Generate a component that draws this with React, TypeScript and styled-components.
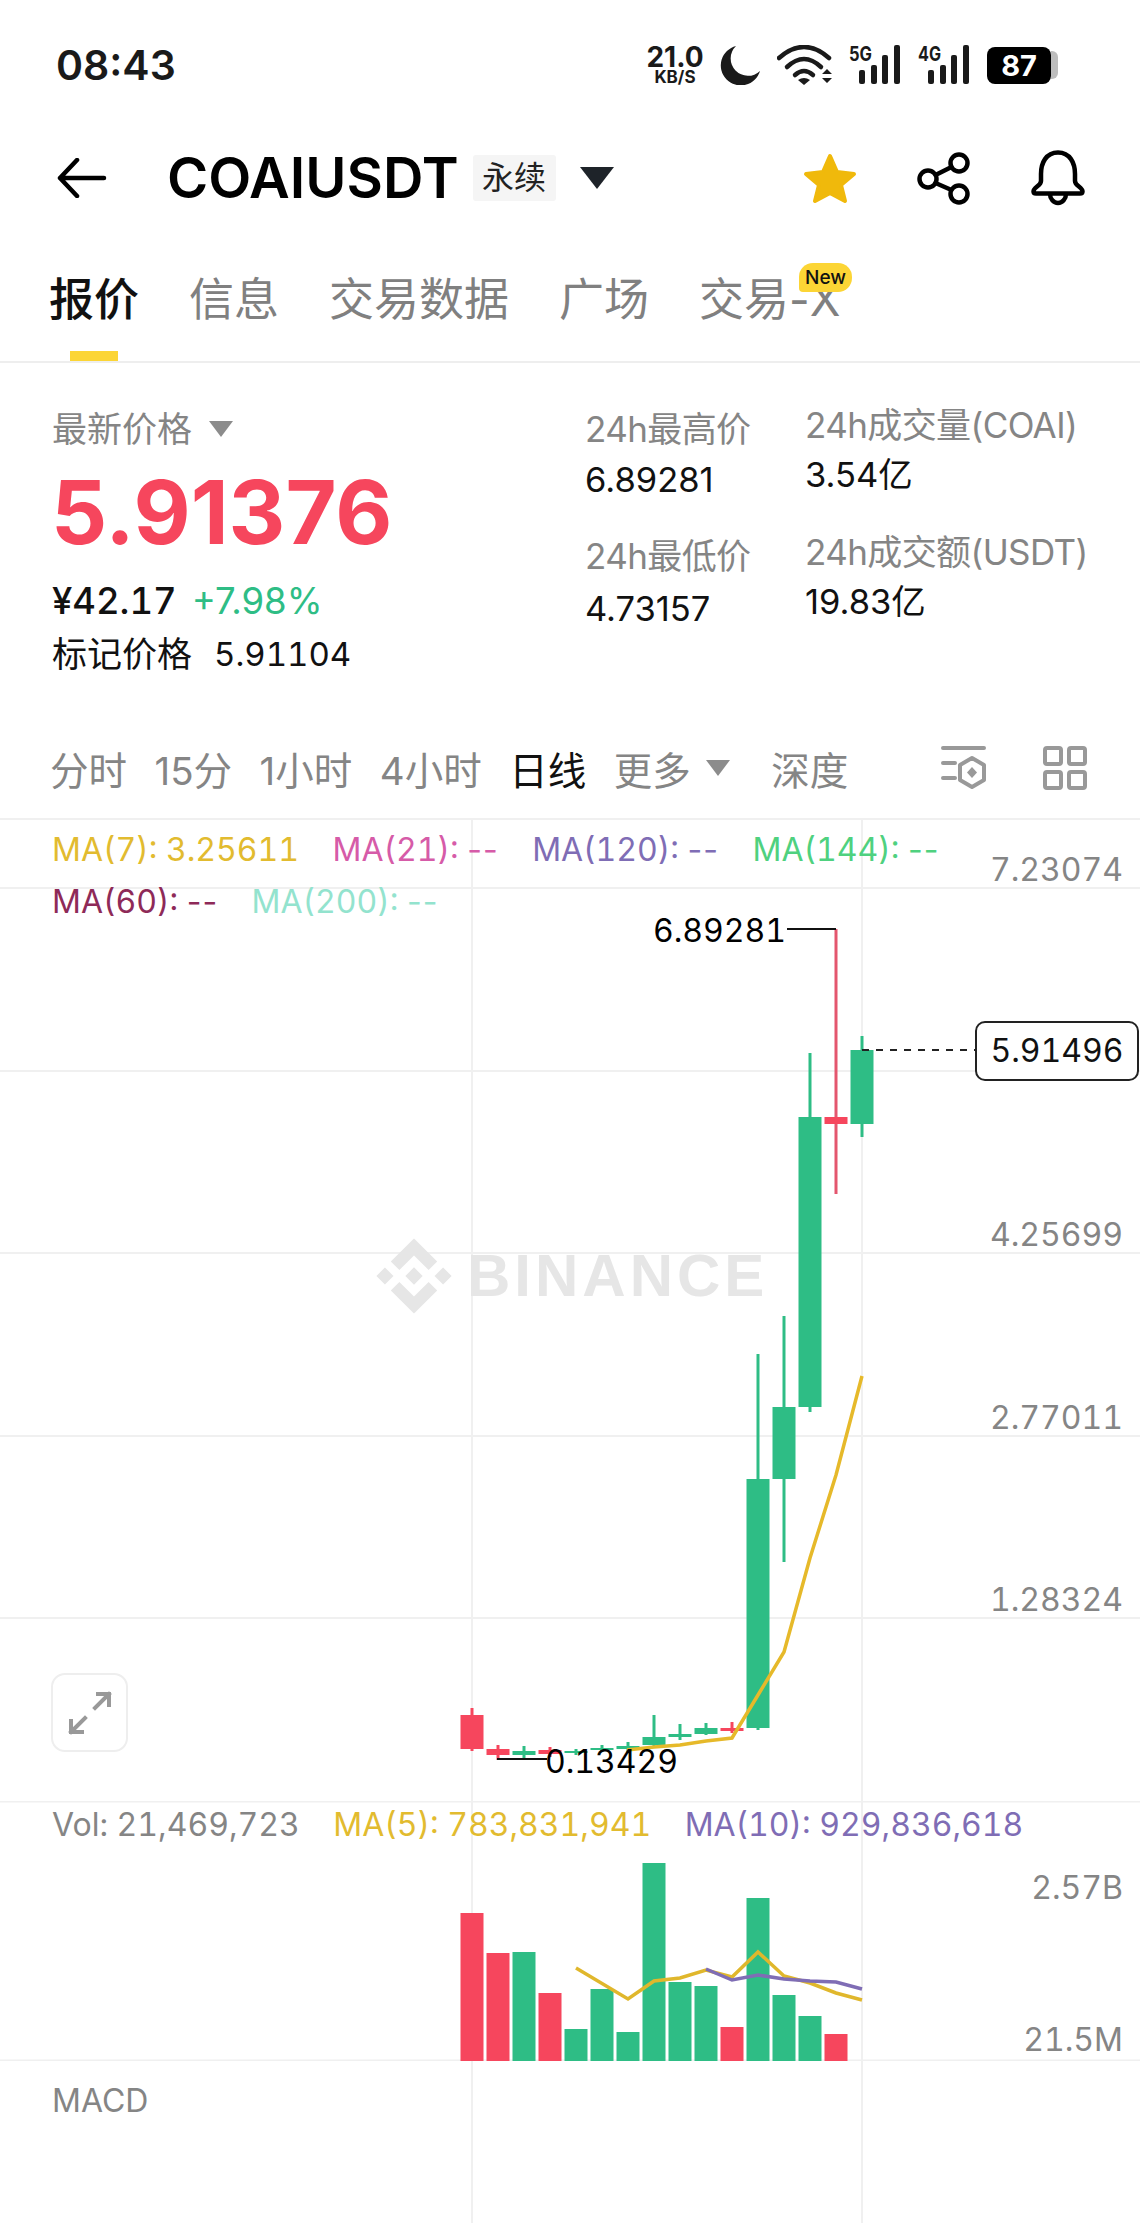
import styled, { createGlobalStyle } from "styled-components";

const UI_FONT = `Inter, "Noto Sans CJK SC", sans-serif`;

const GREEN = "#2ebd85";
const RED = "#f6465d";
const GRID = "#f0f0f0";

const GlobalStyle = createGlobalStyle`
  html, body {
    margin: 0;
    padding: 0;
    background: #fff;
  }
  * {
    box-sizing: border-box;
  }
`;

const Page = styled.div`
  width: 1140px;
  height: 2223px;
  overflow: hidden;
  background: #fff;
  font-family: ${UI_FONT};
  color: #000;
`;

/* status bar */
const StatusBar = styled.div`
  height: 130px;
  display: flex;
  align-items: center;
  padding: 0 82px 0 56px;
`;

const Clock = styled.div`
  font-size: 41px;
  font-weight: 600;
  color: #1a1a1a;
`;

const StatusIcons = styled.div`
  margin-left: auto;
  display: flex;
  align-items: center;
  gap: 17px;
`;

const Speed = styled.div`
  width: 56px;
  display: flex;
  flex-direction: column;
  align-items: center;
  font-weight: 700;
  color: #1a1a1a;
`;

const SpeedValue = styled.span`
  font-size: 28px;
  line-height: 23px;
`;

const SpeedUnit = styled.span`
  font-size: 17px;
  line-height: 16px;
`;

const SignalSvg = styled.svg`
  display: block;
  margin-top: -6px;
`;

const Battery = styled.div`
  display: flex;
  align-items: center;
`;

const BatteryBody = styled.div`
  width: 64px;
  height: 37px;
  border-radius: 8px;
  background: #000;
  color: #fff;
  font-size: 29px;
  font-weight: 700;
  line-height: 37px;
  text-align: center;
`;

const BatteryNub = styled.div`
  width: 7px;
  height: 28px;
  border-radius: 0 6px 6px 0;
  background: #bdbdbd;
`;

/* symbol header */
const SymbolBar = styled.div`
  height: 96px;
  display: flex;
  align-items: center;
  padding: 0 55px 0 57px;
`;

const Symbol = styled.div`
  margin-left: 60px;
  font-size: 56px;
  font-weight: 600;
`;

const ContractTag = styled.div`
  margin-left: 14px;
  width: 83px;
  height: 46px;
  background: #f5f5f5;
  border-radius: 3px;
  font-size: 32px;
  line-height: 46px;
  text-align: center;
  color: #222;
`;

const SymbolCaret = styled.div`
  margin-left: 24px;
  width: 0;
  height: 0;
  border-left: 17px solid transparent;
  border-right: 17px solid transparent;
  border-top: 22px solid #1e2329;
`;

const SymbolActions = styled.div`
  margin-left: auto;
  display: flex;
  align-items: center;
  gap: 60px;
`;

/* tabs */
const Tabs = styled.div`
  height: 137px;
  display: flex;
  gap: 50px;
  padding: 48px 0 0 49px;
  border-bottom: 2px solid #eeeeee;
`;

const Tab = styled.div<{ $active?: boolean }>`
  position: relative;
  height: 87px;
  font-size: 45px;
  line-height: 52px;
  color: ${({ $active }) => ($active ? "#111" : "#808080")};
  font-weight: ${({ $active }) => ($active ? 500 : 400)};

  ${({ $active }) =>
    $active
      ? `&::after {
          content: "";
          position: absolute;
          left: 21px;
          bottom: 0;
          width: 48px;
          height: 10px;
          background: #fcd535;
        }`
      : ""}
`;

const NewBadge = styled.span`
  position: absolute;
  left: 100px;
  top: -11px;
  width: 53px;
  height: 29px;
  border-radius: 14px 14px 14px 4px;
  background: #fcd535;
  color: #111;
  font-size: 19px;
  font-weight: 500;
  line-height: 29px;
  text-align: center;
`;

/* quote */
const Quote = styled.div`
  height: 355px;
  display: flex;
  padding: 42px 0 0 52px;
`;

const PriceColumn = styled.div`
  width: 533px;
`;

const StatColumn = styled.div<{ $width: number; $shift?: number }>`
  width: ${({ $width }) => $width}px;
  margin-top: ${({ $shift }) => $shift ?? 0}px;
`;

const MutedLabel = styled.div`
  display: flex;
  align-items: center;
  gap: 17px;
  font-size: 35px;
  line-height: 48px;
  color: #858585;
`;

const SmallCaret = styled.span`
  display: inline-block;
  width: 0;
  height: 0;
  border-left: 12px solid transparent;
  border-right: 12px solid transparent;
  border-top: 16px solid #8c8c8c;
`;

const LastPrice = styled.div`
  margin-top: 16px;
  margin-left: -1px;
  font-size: 88px;
  font-weight: 700;
  line-height: 86px;
  color: ${RED};
`;

const FiatRow = styled.div`
  margin-top: 24px;
  display: flex;
  align-items: center;
  gap: 15px;
  line-height: 44px;
`;

const FiatValue = styled.span`
  font-size: 36.5px;
  font-weight: 500;
  font-variant-numeric: tabular-nums;
  color: #111;
`;

const Change = styled.span`
  font-size: 36.5px;
  color: ${GREEN};
`;

const MarkRow = styled.div`
  margin-top: 9px;
  display: flex;
  align-items: center;
  gap: 22px;
  font-size: 35px;
  line-height: 44px;
  color: #111;
`;

const MarkValue = styled.span`
  font-size: 33px;
  font-variant-numeric: tabular-nums;
`;

const StatBlock = styled.div`
  height: 127px;
`;

const StatLabel = styled.div`
  font-size: 35px;
  line-height: 48px;
  letter-spacing: -0.6px;
  color: #858585;
  white-space: nowrap;
`;

const StatValue = styled.div<{ $gap: number }>`
  margin-top: ${({ $gap }) => $gap}px;
  font-size: 34.5px;
  line-height: 44px;
  color: #111;
`;

/* interval toolbar */
const Toolbar = styled.div`
  height: 100px;
  display: flex;
  align-items: center;
  gap: 27.5px;
  padding: 0 53px 0 50px;
`;

const Interval = styled.div<{ $active?: boolean; $far?: boolean }>`
  display: flex;
  align-items: center;
  gap: 15px;
  margin-left: ${({ $far }) => ($far ? 14 : 0)}px;
  font-size: 38.5px;
  color: ${({ $active }) => ($active ? "#111" : "#858585")};
`;

const ToolbarIcons = styled.div`
  margin-left: auto;
  display: flex;
  align-items: center;
  gap: 57px;
`;

/* chart panels */
const ChartPanel = styled.div<{ $height: number; $top?: boolean }>`
  position: relative;
  height: ${({ $height }) => $height}px;
  ${({ $top }) => ($top ? `border-top: 2px solid ${GRID};` : "")}
`;

const ChartCanvas = styled.svg`
  position: absolute;
  left: 0;
  top: 0;
  display: block;
`;

const Legend = styled.div<{ $width: number; $pad: number }>`
  position: relative;
  width: ${({ $width }) => $width}px;
  display: flex;
  flex-wrap: wrap;
  gap: 8px 33.5px;
  padding: ${({ $pad }) => $pad}px 0 0 52px;
  font-size: 32px;
  line-height: 44px;
`;

const LegendItem = styled.span<{ $color: string }>`
  color: ${({ $color }) => $color};
  font-variant-numeric: tabular-nums;
  white-space: nowrap;
`;

const Blank = styled.span`
  font-variant-numeric: normal;
  letter-spacing: 1px;
`;

const AxisLabel = styled.div<{ $top: number }>`
  position: absolute;
  right: 17px;
  top: ${({ $top }) => $top}px;
  font-size: 32px;
  font-variant-numeric: tabular-nums;
  line-height: 44px;
  color: #858585;
`;

const PriceMark = styled.div<{ $left: number; $top: number }>`
  position: absolute;
  left: ${({ $left }) => $left}px;
  top: ${({ $top }) => $top}px;
  font-size: 32px;
  font-variant-numeric: tabular-nums;
  line-height: 44px;
  color: #000;
`;

const CurrentPrice = styled.div`
  position: absolute;
  left: 975px;
  top: 201px;
  width: 164px;
  height: 60px;
  border: 2px solid #222;
  border-radius: 10px;
  background: #fff;
  color: #111;
  font-size: 32px;
  font-variant-numeric: tabular-nums;
  line-height: 56px;
  text-align: center;
`;

const Watermark = styled.div`
  position: absolute;
  left: 376px;
  top: 418px;
  display: flex;
  align-items: center;
  gap: 15px;
  color: #e6e6e6;
`;

const WatermarkText = styled.span`
  font-family: "Liberation Sans", sans-serif;
  font-size: 60px;
  font-weight: 700;
  letter-spacing: 4px;
  line-height: 76px;
`;

const ExpandButton = styled.div`
  position: absolute;
  left: 51px;
  top: 853px;
  width: 77px;
  height: 79px;
  border: 2px solid #eeeeee;
  border-radius: 14px;
  background: #fff;
  display: flex;
  align-items: center;
  justify-content: center;
`;

const PanelLabel = styled.div`
  position: relative;
  padding: 18px 0 0 52px;
  font-size: 32px;
  line-height: 44px;
  color: #858585;
`;

type Candle = {
  x: number;
  high: number;
  low: number;
  top: number;
  bottom: number;
  up: boolean;
};

const candles: Candle[] = [
  { x: 472, high: 1708, low: 1751, top: 1715, bottom: 1749, up: false },
  { x: 498, high: 1745, low: 1760, top: 1749, bottom: 1755, up: false },
  { x: 524, high: 1746, low: 1758, top: 1751, bottom: 1755, up: true },
  { x: 550, high: 1747, low: 1757, top: 1750, bottom: 1754, up: false },
  { x: 576, high: 1749, low: 1755, top: 1751, bottom: 1753, up: true },
  { x: 602, high: 1745, low: 1752, top: 1748, bottom: 1750, up: true },
  { x: 628, high: 1742, low: 1752, top: 1746, bottom: 1749, up: true },
  { x: 654, high: 1715, low: 1747, top: 1737, bottom: 1745, up: true },
  { x: 680, high: 1724, low: 1740, top: 1734, bottom: 1737, up: true },
  { x: 706, high: 1723, low: 1735, top: 1728, bottom: 1734, up: true },
  { x: 732, high: 1722, low: 1733, top: 1728, bottom: 1731, up: false },
  { x: 758, high: 1354, low: 1730, top: 1479, bottom: 1728, up: true },
  { x: 784, high: 1316, low: 1562, top: 1407, bottom: 1479, up: true },
  { x: 810, high: 1053, low: 1412, top: 1117, bottom: 1407, up: true },
  { x: 836, high: 929, low: 1194, top: 1117, bottom: 1124, up: false },
  { x: 862, high: 1036, low: 1137, top: 1050, bottom: 1124, up: true },
];

const volumes: [number, boolean][] = [
  [1913, false],
  [1953, false],
  [1952, true],
  [1993, false],
  [2029, true],
  [1989, true],
  [2032, true],
  [1863, true],
  [1982, true],
  [1986, true],
  [2027, false],
  [1898, true],
  [1995, true],
  [2016, true],
  [2034, false],
];

const ma7 = "627,1750 654,1747 680,1745 706,1741 732,1738 758,1695 784,1652 810,1558 836,1475 862,1376";
const volMa5 = "576,1968 628,1999 654,1981 680,1978 706,1970 732,1977 758,1952 784,1976 810,1983 836,1993 862,2000";
const volMa10 = "706,1969 732,1980 758,1975 784,1979 810,1981 836,1982 862,1989";

const gridRows = [888, 1071, 1253, 1436, 1618];

const maLegend = [
  { text: "MA(7): 3.25611", color: "#e2bb2f", empty: false },
  { text: "MA(21): ", color: "#d65ba8", empty: true },
  { text: "MA(120): ", color: "#7f6db5", empty: true },
  { text: "MA(144): ", color: "#4fd17f", empty: true },
  { text: "MA(60): ", color: "#8e2a58", empty: true },
  { text: "MA(200): ", color: "#93e3ce", empty: true },
];

const volLegend = [
  { text: "Vol: 21,469,723", color: "#858585" },
  { text: "MA(5): 783,831,941", color: "#e2bb2f" },
  { text: "MA(10): 929,836,618", color: "#7f6db5" },
];

const axisLabels = [
  { text: "7.23074", top: 28 },
  { text: "4.25699", top: 393 },
  { text: "2.77011", top: 576 },
  { text: "1.28324", top: 758 },
];

const MoonIcon = () => (
  <svg width="40" height="40" viewBox="0 0 40 40">
    <path d="M16 1A20 20 0 1 0 40 26 A17 17 0 0 1 16 1Z" fill="#1a1a1a" />
  </svg>
);

const WifiIcon = () => (
  <svg width="55" height="40" viewBox="0 0 55 40" fill="none" stroke="#1a1a1a" strokeWidth="4.5" strokeLinecap="round">
    <path d="M2 13Q27 -9 52 13" />
    <path d="M10 22Q27 6 44 22" />
    <path d="M18 30Q27 22 36 30" />
    <path d="M21 35L27 40L33 35Q27 31 21 35Z" fill="#1a1a1a" stroke="none" />
    <path d="M45 29L50 24L55 29ZM45 33L50 38L55 33Z" fill="#1a1a1a" stroke="none" />
  </svg>
);

const SignalIcon = ({ label }: { label: string }) => (
  <SignalSvg width="52" height="46" viewBox="0 -6 52 46">
    <text x="0" y="16" fontFamily="Inter, sans-serif" fontWeight="700" fontSize="20" fill="#1a1a1a" textLength="23" lengthAdjust="spacingAndGlyphs">
      {label}
    </text>
    <rect x="10" y="25" width="6" height="14" rx="2" fill="#1a1a1a" />
    <rect x="22" y="20" width="6" height="19" rx="2" fill="#1a1a1a" />
    <rect x="33" y="10" width="6" height="29" rx="2" fill="#1a1a1a" />
    <rect x="45" y="0" width="6" height="39" rx="2" fill="#1a1a1a" />
  </SignalSvg>
);

const BackIcon = () => (
  <svg width="50" height="40" viewBox="0 0 50 40" fill="none" stroke="#000" strokeWidth="4.5" strokeLinecap="round" strokeLinejoin="round">
    <path d="M47 20H3M20 2L3 20L20 38" />
  </svg>
);

const StarIcon = () => (
  <svg width="54" height="51" viewBox="0 0 54 51">
    <path
      d="M27 3L34 19L51 21L38 32L42 48L27 40L12 48L16 32L3 21L20 19Z"
      fill="#f0b90b"
      stroke="#f0b90b"
      strokeWidth="4"
      strokeLinejoin="round"
    />
  </svg>
);

const ShareIcon = () => (
  <svg width="54" height="53" viewBox="0 0 54 53" fill="none" stroke="#000" strokeWidth="4.5">
    <circle cx="42" cy="11" r="8.5" />
    <circle cx="11" cy="27" r="8.5" />
    <circle cx="42" cy="42" r="8.5" />
    <path d="M34.5 15L18.5 23M18.5 31L34.5 38" />
  </svg>
);

const BellIcon = () => (
  <svg width="54" height="56" viewBox="0 0 54 56" fill="none" stroke="#000" strokeWidth="4.5" strokeLinejoin="round">
    <path d="M27 2.5C15 2.5 10 13 10 24V31C10 36 2.5 37 2.5 41.5Q2.5 43.5 5 43.5H49Q51.5 43.5 51.5 41.5C51.5 37 44 36 44 31V24C44 13 39 2.5 27 2.5Z" />
    <path d="M19 44A8 9 0 0 0 35 44" />
  </svg>
);

const DepthIcon = () => (
  <svg width="45" height="44" viewBox="0 0 45 44" fill="none" stroke="#999" strokeWidth="4" strokeLinecap="round">
    <path d="M2 2H43M2 17H14M2 32H14" />
    <path d="M31 12L43 19V34L31 41L19 34V19Z" strokeLinejoin="round" />
    <path d="M31 21L36 26.5L31 32L26 26.5Z" fill="#999" stroke="none" />
  </svg>
);

const GridIcon = () => (
  <svg width="44" height="44" viewBox="0 0 44 44" fill="none" stroke="#999" strokeWidth="4">
    <rect x="2" y="2" width="16" height="16" rx="2" />
    <rect x="26" y="2" width="16" height="16" rx="2" />
    <rect x="2" y="26" width="16" height="16" rx="2" />
    <rect x="26" y="26" width="16" height="16" rx="2" />
  </svg>
);

const ExpandIcon = () => (
  <svg width="46" height="46" viewBox="0 0 46 46" fill="none" stroke="#999" strokeWidth="4" strokeLinecap="square">
    <path d="M28 18L42 4M31 4H42V15" />
    <path d="M18 28L4 42M4 31V42H15" />
  </svg>
);

const BinanceLogo = () => (
  <svg width="76" height="76" viewBox="0 0 126 126" fill="#e6e6e6">
    <path d="M38.73 53.2L63 28.94l24.28 24.28 14.12-14.12L63 .68 24.6 39.08zM.68 63l14.12-14.12L28.92 63 14.8 77.12zM38.73 72.8L63 97.06l24.28-24.28 14.13 14.11L63 125.32 24.6 86.92l-.02-.02zM97.08 63l14.12-14.12L125.32 63l-14.12 14.12zM77.32 63L63 48.67 52.4 59.26l-1.21 1.22-2.51 2.51L63 77.32 77.33 63z" />
  </svg>
);

const VerticalGrid = ({ from, to }: { from: number; to: number }) => (
  <>
    <line x1="472" x2="472" y1={from} y2={to} stroke={GRID} strokeWidth="2" />
    <line x1="862" x2="862" y1={from} y2={to} stroke={GRID} strokeWidth="2" />
  </>
);

const App = () => (
  <Page>
    <GlobalStyle />
    <StatusBar>
      <Clock>08:43</Clock>
      <StatusIcons>
        <Speed>
          <SpeedValue>21.0</SpeedValue>
          <SpeedUnit>KB/S</SpeedUnit>
        </Speed>
        <MoonIcon />
        <WifiIcon />
        <SignalIcon label="5G" />
        <SignalIcon label="4G" />
        <Battery>
          <BatteryBody>87</BatteryBody>
          <BatteryNub />
        </Battery>
      </StatusIcons>
    </StatusBar>

    <SymbolBar>
      <BackIcon />
      <Symbol>COAIUSDT</Symbol>
      <ContractTag>永续</ContractTag>
      <SymbolCaret />
      <SymbolActions>
        <StarIcon />
        <ShareIcon />
        <BellIcon />
      </SymbolActions>
    </SymbolBar>

    <Tabs>
      <Tab $active>报价</Tab>
      <Tab>信息</Tab>
      <Tab>交易数据</Tab>
      <Tab>广场</Tab>
      <Tab>
        交易-X
        <NewBadge>New</NewBadge>
      </Tab>
    </Tabs>

    <Quote>
      <PriceColumn>
        <MutedLabel>
          最新价格
          <SmallCaret />
        </MutedLabel>
        <LastPrice>5.91376</LastPrice>
        <FiatRow>
          <FiatValue>¥42.17</FiatValue>
          <Change>+7.98%</Change>
        </FiatRow>
        <MarkRow>
          标记价格
          <MarkValue>5.91104</MarkValue>
        </MarkRow>
      </PriceColumn>
      <StatColumn $width={220}>
        <StatBlock>
          <StatLabel>24h最高价</StatLabel>
          <StatValue $gap={5}>6.89281</StatValue>
        </StatBlock>
        <StatBlock>
          <StatLabel>24h最低价</StatLabel>
          <StatValue $gap={7}>4.73157</StatValue>
        </StatBlock>
      </StatColumn>
      <StatColumn $width={330} $shift={-4}>
        <StatBlock>
          <StatLabel>24h成交量(COAI)</StatLabel>
          <StatValue $gap={4}>3.54亿</StatValue>
        </StatBlock>
        <StatBlock>
          <StatLabel>24h成交额(USDT)</StatLabel>
          <StatValue $gap={4}>19.83亿</StatValue>
        </StatBlock>
      </StatColumn>
    </Quote>

    <Toolbar>
      <Interval>分时</Interval>
      <Interval>15分</Interval>
      <Interval>1小时</Interval>
      <Interval>4小时</Interval>
      <Interval $active>日线</Interval>
      <Interval>
        更多
        <SmallCaret />
      </Interval>
      <Interval $far>深度</Interval>
      <ToolbarIcons>
        <DepthIcon />
        <GridIcon />
      </ToolbarIcons>
    </Toolbar>

    <ChartPanel $height={983} $top>
      <ChartCanvas width="1140" height="981" viewBox="0 820 1140 981">
        <VerticalGrid from={820} to={1801} />
        {gridRows.map((y) => (
          <line key={y} x1="0" x2="1140" y1={y} y2={y} stroke={GRID} strokeWidth="2" />
        ))}
        {candles.map((c) => {
          const color = c.up ? GREEN : RED;
          return (
            <g key={c.x}>
              <line x1={c.x} x2={c.x} y1={c.high} y2={c.low} stroke={c.x === 836 ? "#e4566e" : color} strokeWidth="3" />
              <rect x={c.x - 11.5} y={c.top} width="23" height={c.bottom - c.top} fill={color} />
            </g>
          );
        })}
        <polyline points={ma7} fill="none" stroke="#e6b92a" strokeWidth="3.5" />
        <path d="M787 929H836M497 1759H547" stroke="#111" strokeWidth="2" fill="none" />
        <line x1="862" x2="975" y1="1050" y2="1050" stroke="#222" strokeWidth="2" strokeDasharray="7 7" />
      </ChartCanvas>
      <Legend $width={1000} $pad={8}>
        {maLegend.map((item) => (
          <LegendItem key={item.text} $color={item.color}>
            {item.text}
            {item.empty ? <Blank>--</Blank> : null}
          </LegendItem>
        ))}
      </Legend>
      {axisLabels.map((label) => (
        <AxisLabel key={label.text} $top={label.top}>
          {label.text}
        </AxisLabel>
      ))}
      <PriceMark $left={653} $top={89}>
        6.89281
      </PriceMark>
      <PriceMark $left={545} $top={920}>
        0.13429
      </PriceMark>
      <CurrentPrice>5.91496</CurrentPrice>
      <Watermark>
        <BinanceLogo />
        <WatermarkText>BINANCE</WatermarkText>
      </Watermark>
      <ExpandButton>
        <ExpandIcon />
      </ExpandButton>
    </ChartPanel>

    <ChartPanel $height={260}>
      <ChartCanvas width="1140" height="260" viewBox="0 1801 1140 260">
        <VerticalGrid from={1801} to={2061} />
        <line x1="0" x2="1140" y1="1801" y2="1801" stroke={GRID} strokeWidth="3" />
        <line x1="0" x2="1140" y1="2061" y2="2061" stroke={GRID} strokeWidth="3" />
        {volumes.map(([top, up], i) => (
          <rect key={i} x={460.5 + i * 26} y={top} width="23" height={2061 - top} fill={up ? GREEN : RED} />
        ))}
        <polyline points={volMa5} fill="none" stroke="#e0b72c" strokeWidth="3.5" />
        <polyline points={volMa10} fill="none" stroke="#7f6db5" strokeWidth="3.5" />
      </ChartCanvas>
      <Legend $width={1100} $pad={2}>
        {volLegend.map((item) => (
          <LegendItem key={item.text} $color={item.color}>
            {item.text}
          </LegendItem>
        ))}
      </Legend>
      <AxisLabel $top={65}>2.57B</AxisLabel>
      <AxisLabel $top={217}>21.5M</AxisLabel>
    </ChartPanel>

    <ChartPanel $height={162}>
      <ChartCanvas width="1140" height="162" viewBox="0 2061 1140 162">
        <VerticalGrid from={2061} to={2223} />
      </ChartCanvas>
      <PanelLabel>MACD</PanelLabel>
    </ChartPanel>
  </Page>
);

export default App;
